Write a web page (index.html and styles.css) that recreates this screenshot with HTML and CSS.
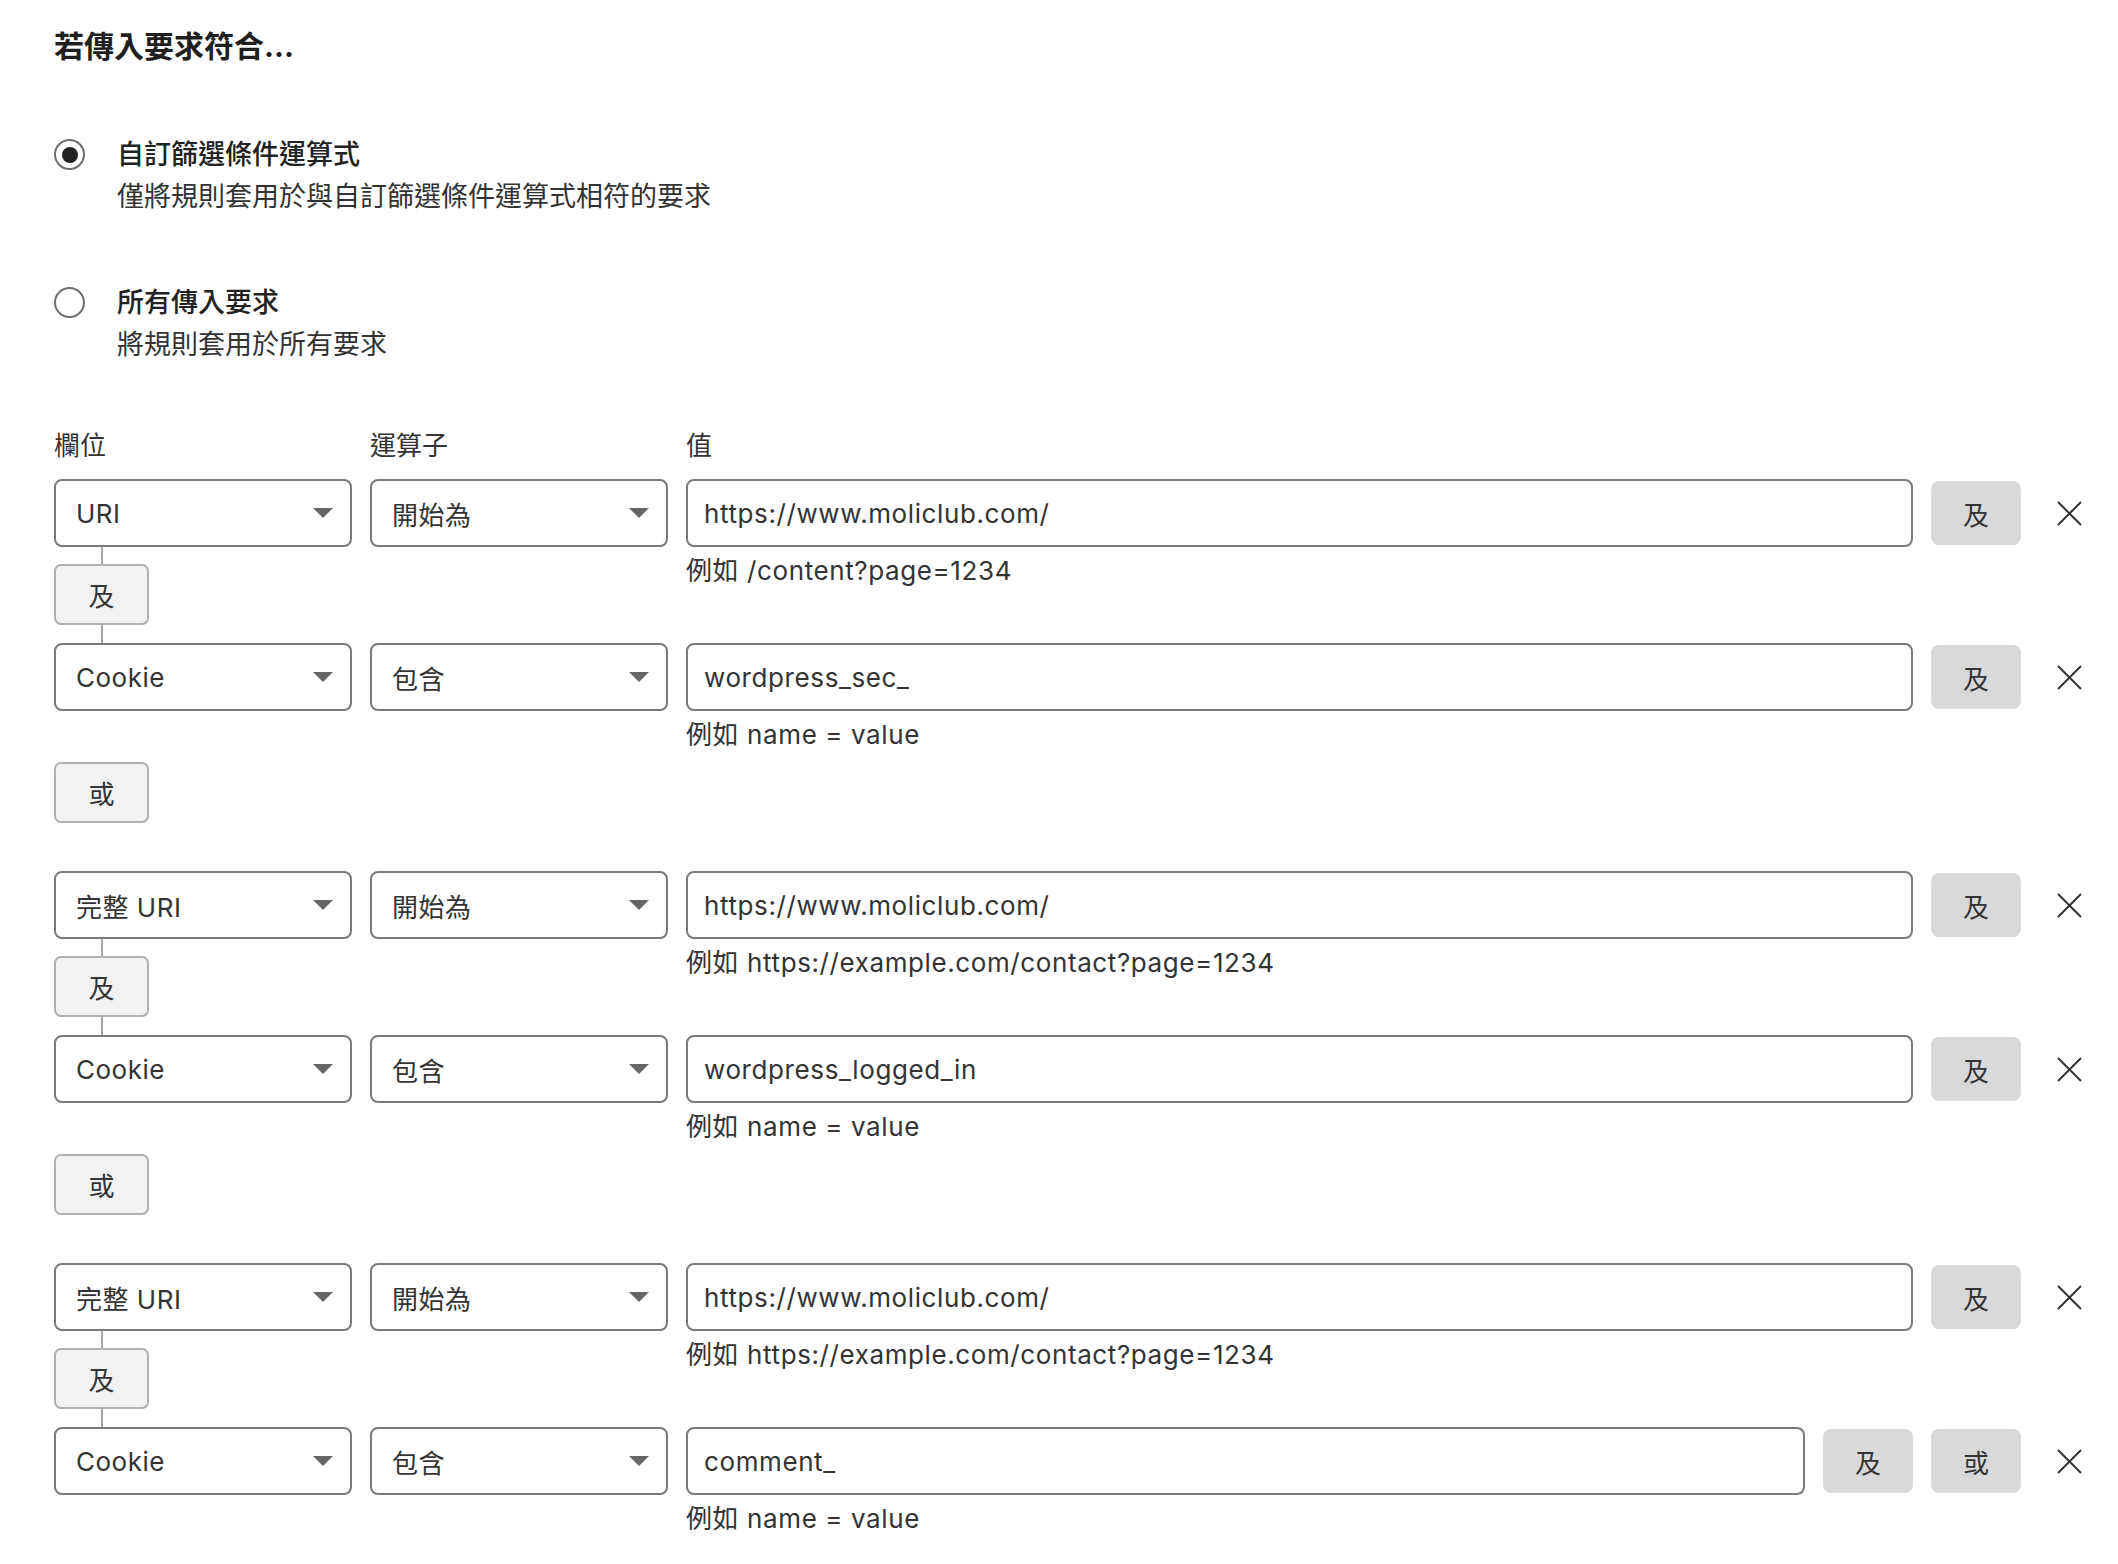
FILE: index.html
```html
<!DOCTYPE html>
<html lang="zh-Hant">
<head>
  <meta charset="UTF-8">
  <meta name="viewport" content="width=device-width, initial-scale=1.0">
  <title>若傳入要求符合</title>
  <link rel="stylesheet" href="styles.css">
</head>
<body>
  <div class="page">
    <h1 class="title">若傳入要求符合...</h1>

    <div class="radios">
      <label class="option">
        <span class="radio checked"></span>
        <span class="option-text">
          <span class="option-label">自訂篩選條件運算式</span>
          <span class="option-desc">僅將規則套用於與自訂篩選條件運算式相符的要求</span>
        </span>
      </label>
      <label class="option">
        <span class="radio"></span>
        <span class="option-text">
          <span class="option-label">所有傳入要求</span>
          <span class="option-desc">將規則套用於所有要求</span>
        </span>
      </label>
    </div>

    <div class="cols">
      <span>欄位</span>
      <span>運算子</span>
      <span>值</span>
    </div>

    <!-- 第一組 -->
    <div class="group">
      <div class="cond">
        <div class="select field"><span>URI</span><span class="caret"></span></div>
        <div class="select op"><span>開始為</span><span class="caret"></span></div>
        <input class="value" type="text" value="https://www.moliclub.com/">
        <div class="actions"><button class="act">及</button></div>
        <button class="close"><svg width="25" height="25" viewBox="0 0 25 25"><path d="M1 1L24 24M24 1L1 24" stroke="#333" stroke-width="2" fill="none"/></svg></button>
      </div>
      <div class="mid">
        <div class="joint"><span class="line top"></span><button class="link-btn">及</button><span class="line bottom"></span></div>
        <div class="hint">例如 /content?page=1234</div>
      </div>
      <div class="cond">
        <div class="select field"><span>Cookie</span><span class="caret"></span></div>
        <div class="select op"><span>包含</span><span class="caret"></span></div>
        <input class="value" type="text" value="wordpress_sec_">
        <div class="actions"><button class="act">及</button></div>
        <button class="close"><svg width="25" height="25" viewBox="0 0 25 25"><path d="M1 1L24 24M24 1L1 24" stroke="#333" stroke-width="2" fill="none"/></svg></button>
      </div>
      <div class="tail"><div class="hint">例如 name = value</div></div>
      <button class="link-btn or">或</button>
    </div>

    <!-- 第二組 -->
    <div class="group">
      <div class="cond">
        <div class="select field"><span>完整 URI</span><span class="caret"></span></div>
        <div class="select op"><span>開始為</span><span class="caret"></span></div>
        <input class="value" type="text" value="https://www.moliclub.com/">
        <div class="actions"><button class="act">及</button></div>
        <button class="close"><svg width="25" height="25" viewBox="0 0 25 25"><path d="M1 1L24 24M24 1L1 24" stroke="#333" stroke-width="2" fill="none"/></svg></button>
      </div>
      <div class="mid">
        <div class="joint"><span class="line top"></span><button class="link-btn">及</button><span class="line bottom"></span></div>
        <div class="hint">例如 https://example.com/contact?page=1234</div>
      </div>
      <div class="cond">
        <div class="select field"><span>Cookie</span><span class="caret"></span></div>
        <div class="select op"><span>包含</span><span class="caret"></span></div>
        <input class="value" type="text" value="wordpress_logged_in">
        <div class="actions"><button class="act">及</button></div>
        <button class="close"><svg width="25" height="25" viewBox="0 0 25 25"><path d="M1 1L24 24M24 1L1 24" stroke="#333" stroke-width="2" fill="none"/></svg></button>
      </div>
      <div class="tail"><div class="hint">例如 name = value</div></div>
      <button class="link-btn or">或</button>
    </div>

    <!-- 第三組 -->
    <div class="group">
      <div class="cond">
        <div class="select field"><span>完整 URI</span><span class="caret"></span></div>
        <div class="select op"><span>開始為</span><span class="caret"></span></div>
        <input class="value" type="text" value="https://www.moliclub.com/">
        <div class="actions"><button class="act">及</button></div>
        <button class="close"><svg width="25" height="25" viewBox="0 0 25 25"><path d="M1 1L24 24M24 1L1 24" stroke="#333" stroke-width="2" fill="none"/></svg></button>
      </div>
      <div class="mid">
        <div class="joint"><span class="line top"></span><button class="link-btn">及</button><span class="line bottom"></span></div>
        <div class="hint">例如 https://example.com/contact?page=1234</div>
      </div>
      <div class="cond">
        <div class="select field"><span>Cookie</span><span class="caret"></span></div>
        <div class="select op"><span>包含</span><span class="caret"></span></div>
        <input class="value" type="text" value="comment_">
        <div class="actions"><button class="act">及</button><button class="act">或</button></div>
        <button class="close"><svg width="25" height="25" viewBox="0 0 25 25"><path d="M1 1L24 24M24 1L1 24" stroke="#333" stroke-width="2" fill="none"/></svg></button>
      </div>
      <div class="tail"><div class="hint">例如 name = value</div></div>
    </div>
  </div>
</body>
</html>
```

FILE: styles.css
```css
body {
  margin: 0;
  padding: 0;
  background-color: #ffffff;
  color: #333333;
  font-family: Inter, "Noto Sans CJK TC", sans-serif;
}

.page {
  padding: 26px 18px 0 54px;
}

.title {
  margin: 0;
  font-size: 30px;
  line-height: 40px;
  font-weight: 700;
  color: #1f1f1f;
}

.radios {
  margin-top: 69px;
}

.option {
  display: flex;
  align-items: flex-start;
  gap: 32px;
}

.option + .option {
  margin-top: 66px;
}

.radio {
  box-sizing: border-box;
  width: 31px;
  height: 31px;
  margin-top: 4px;
  border: 2px solid #6e6e6e;
  border-radius: 50%;
  display: flex;
  justify-content: center;
  align-items: center;
  flex-shrink: 0;
}

.radio.checked::after {
  content: "";
  width: 16px;
  height: 16px;
  border-radius: 50%;
  background-color: #222222;
}

.option-text {
  display: flex;
  flex-direction: column;
}

.option-label {
  font-size: 27px;
  line-height: 40px;
  font-weight: 500;
  color: #222222;
}

.option-desc {
  margin-top: 2px;
  font-size: 27px;
  line-height: 40px;
  color: #333333;
}

.cols,
.mid,
.tail {
  display: grid;
  grid-template-columns: 298px 298px 1fr;
  column-gap: 18px;
}

.cols {
  margin-top: 63px;
  font-size: 26px;
  line-height: 36px;
  color: #333333;
}

.group {
  margin-top: 15px;
}

.group + .group {
  margin-top: 48px;
}

.cond {
  display: flex;
  align-items: center;
  gap: 18px;
  height: 68px;
}

.select {
  box-sizing: border-box;
  width: 298px;
  height: 68px;
  padding: 0 17px 0 20px;
  border: 2px solid #7a7a7a;
  border-radius: 8px;
  display: flex;
  justify-content: space-between;
  align-items: center;
  font-size: 26px;
  letter-spacing: 0.5px;
  color: #333333;
  flex-shrink: 0;
}

.caret {
  width: 0;
  height: 0;
  border-left: 10px solid transparent;
  border-right: 10px solid transparent;
  border-top: 10px solid #666666;
}

.value {
  box-sizing: border-box;
  flex: 1;
  min-width: 0;
  height: 68px;
  margin: 0;
  padding: 0 16px;
  border: 2px solid #7a7a7a;
  border-radius: 8px;
  font-family: Inter, "Noto Sans CJK TC", sans-serif;
  font-size: 26px;
  letter-spacing: 0.6px;
  color: #333333;
  background-color: #ffffff;
  outline: none;
}

.actions {
  display: flex;
  gap: 18px;
}

.act {
  width: 90px;
  height: 64px;
  border: none;
  border-radius: 8px;
  background-color: #d9d9d9;
  font-family: Inter, "Noto Sans CJK TC", sans-serif;
  font-size: 26px;
  color: #333333;
  padding: 0;
}

.close {
  width: 61px;
  height: 64px;
  padding: 0;
  border: none;
  background: none;
  display: flex;
  justify-content: center;
  align-items: center;
}

.mid {
  height: 96px;
}

.joint {
  width: 95px;
  display: flex;
  flex-direction: column;
  align-items: center;
}

.line {
  width: 2px;
  background-color: #a6a6a6;
}

.line.top {
  height: 17px;
}

.line.bottom {
  height: 18px;
}

.link-btn {
  box-sizing: border-box;
  width: 95px;
  height: 61px;
  padding: 0;
  border: 2px solid #b0b0b0;
  border-radius: 7px;
  background-color: #f2f2f2;
  font-family: Inter, "Noto Sans CJK TC", sans-serif;
  font-size: 26px;
  color: #333333;
}

.link-btn.or {
  display: block;
  margin-top: 9px;
}

.hint {
  grid-column: 3;
  padding-top: 6px;
  font-size: 26px;
  line-height: 36px;
  letter-spacing: 0.6px;
  color: #333333;
}

.tail {
  height: 42px;
}
```
